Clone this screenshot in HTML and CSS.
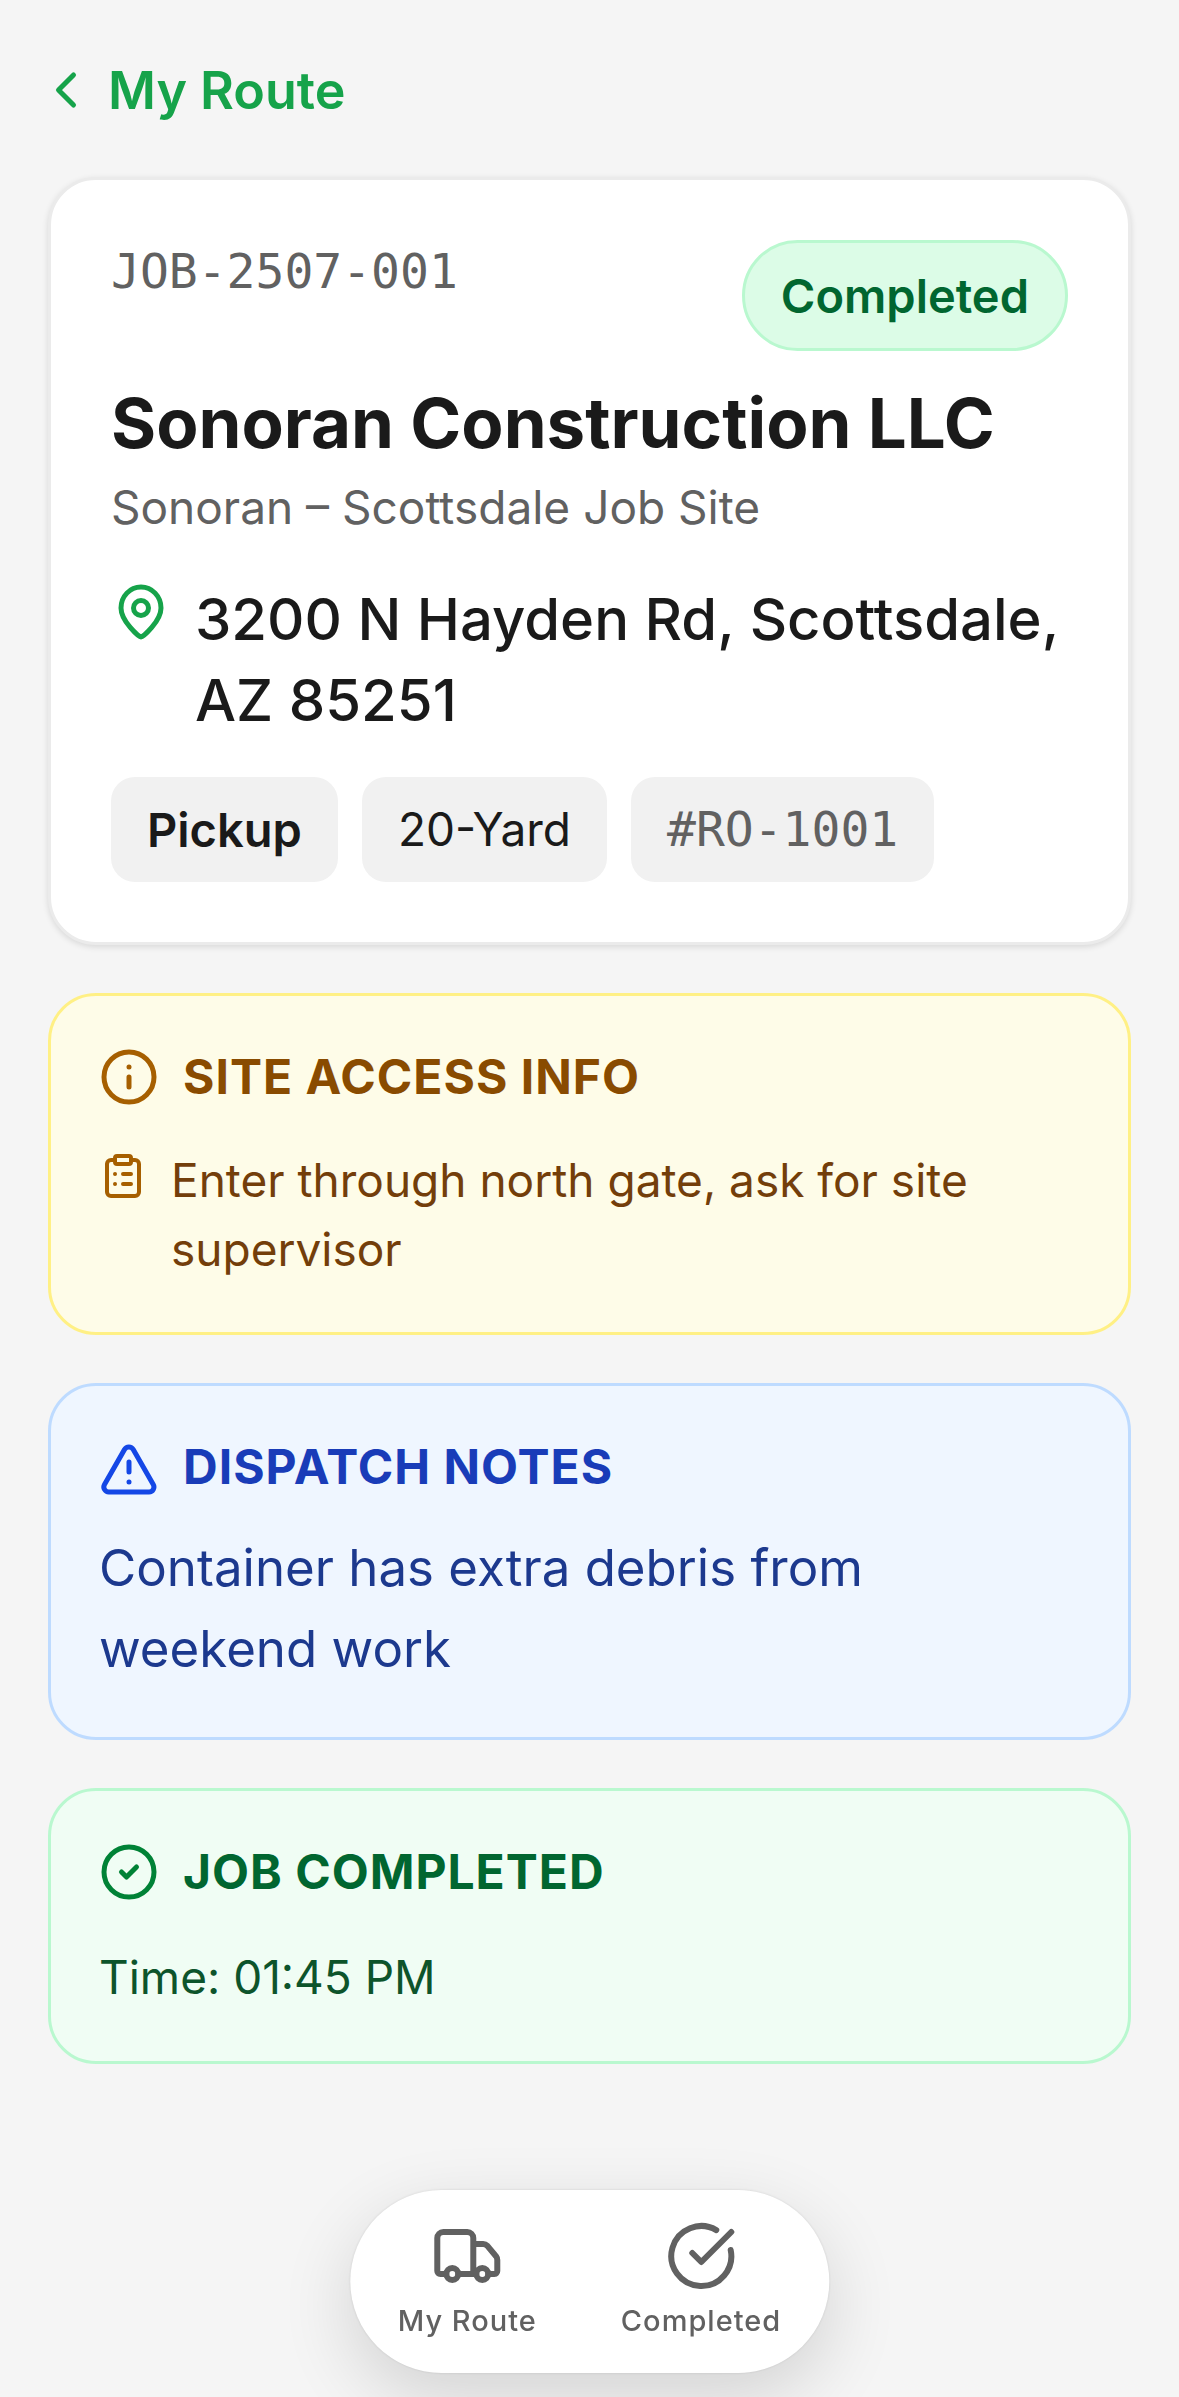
FILE: index.html
```html
<!DOCTYPE html>
<html lang="en">
<head>
  <meta charset="UTF-8">
  <meta name="viewport" content="width=device-width, initial-scale=1.0">
  <title>JOB-2507-001</title>
  <link rel="stylesheet" href="styles.css">
</head>
<body>
  <header class="header">
    <a class="back" href="#">
      <svg class="icon" viewBox="0 0 24 24"><path d="M15 18l-6-6 6-6"/></svg>
      My Route
    </a>
  </header>

  <main class="content">
    <section class="card">
      <div class="card-top">
        <span class="job-id">JOB-2507-001</span>
        <span class="badge">Completed</span>
      </div>
      <h1 class="customer">Sonoran Construction LLC</h1>
      <p class="site">Sonoran – Scottsdale Job Site</p>
      <a class="address" href="#">
        <svg class="icon" viewBox="0 0 24 24">
          <path d="M12 22c-.8 0-8-6.300-8-11.600a8 8.400 0 0 1 16 0C20 15.700 12.800 22 12 22z"/>
          <circle cx="12" cy="10.400" r="3"/>
        </svg>
        <span>3200 N Hayden Rd, Scottsdale, AZ 85251</span>
      </a>
      <div class="chips">
        <span class="chip chip-type">Pickup</span>
        <span class="chip">20-Yard</span>
        <span class="chip chip-id">#RO-1001</span>
      </div>
    </section>

    <section class="notice access">
      <h2 class="notice-title">
        <svg class="icon" viewBox="0 0 24 24">
          <circle cx="12" cy="12" r="10"/>
          <path d="M12 12v4M12 8h.01"/>
        </svg>
        SITE ACCESS INFO
      </h2>
      <div class="notice-row">
        <svg class="icon icon-small" viewBox="0 0 24 24">
          <rect x="8" y="2" width="8" height="4" rx="1"/>
          <path d="M16 4h2a2 2 0 0 1 2 2v14a2 2 0 0 1-2 2H6a2 2 0 0 1-2-2V6a2 2 0 0 1 2-2h2M12 11h4M12 16h4M8 11h.01M8 16h.01"/>
        </svg>
        <p class="notice-text">Enter through north gate, ask for site supervisor</p>
      </div>
    </section>

    <section class="notice dispatch">
      <h2 class="notice-title">
        <svg class="icon" viewBox="0 -1 24 24">
          <path d="M21.700 18l-8-14a2 2 0 0 0-3.500 0l-8 14A2 2 0 0 0 4 21h16a2 2 0 0 0 1.700-3M12 9v4M12 17h.01"/>
        </svg>
        DISPATCH NOTES
      </h2>
      <p class="notice-text">Container has extra debris from weekend work</p>
    </section>

    <section class="notice done">
      <h2 class="notice-title">
        <svg class="icon" viewBox="0 0 24 24">
          <circle cx="12" cy="12" r="10"/>
          <path d="M9 12l2 2 4-4"/>
        </svg>
        JOB COMPLETED
      </h2>
      <p class="notice-text">Time: 01:45 PM</p>
    </section>
  </main>

  <nav class="tabs">
    <a class="tab" href="#">
      <svg class="icon icon-large" viewBox="0 0 24 24">
        <path d="M5 18H3a1 1 0 0 1-1-1V6a2 2 0 0 1 2-2h8a2 2 0 0 1 2 2v12M9 18h6M19 18h2a1 1 0 0 0 1-1v-3.700a2 2 0 0 0-.4-1.200l-2.900-3.500a2 2 0 0 0-1.500-.6H14"/>
        <circle cx="7" cy="18" r="2"/>
        <circle cx="17" cy="18" r="2"/>
      </svg>
      My Route
    </a>
    <a class="tab" href="#">
      <svg class="icon icon-large" viewBox="0 0 24 24">
        <path d="M21.800 10A10 10 0 1 1 17 3.350M9 11l3 3L22 4"/>
      </svg>
      Completed
    </a>
  </nav>
</body>
</html>
```

FILE: styles.css
```css
* {
  box-sizing: border-box;
}

body {
  font-family: Inter, "Liberation Sans", sans-serif;
  font-size: 46px;
  margin: 0;
  min-height: 100vh;
  background: #f5f5f5;
  color: #1a1a1a;
}

h1, h2, p {
  margin: 0;
}

a {
  color: inherit;
  text-decoration: none;
}

.icon {
  width: 60px;
  height: 60px;
  flex-shrink: 0;
  fill: none;
  stroke: currentColor;
  stroke-width: 2;
  stroke-linecap: round;
  stroke-linejoin: round;
}

.icon-small {
  width: 48px;
  height: 48px;
}

.icon-large {
  width: 72px;
  height: 72px;
}

.header {
  padding: 48px 36px 45px;
}

.back {
  display: inline-flex;
  align-items: center;
  gap: 12px;
  height: 84px;
  vertical-align: top;
  color: #16a34a;
  font-size: 52px;
  font-weight: 600;
}

.content {
  display: flex;
  flex-direction: column;
  gap: 48px;
  padding: 0 48px 240px;
}

.card {
  padding: 60px;
  background: #fff;
  border: 3px solid #ebebeb;
  border-radius: 48px;
  box-shadow: 0 2px 6px rgba(0, 0, 0, 0.12);
}

.card-top {
  display: flex;
  justify-content: space-between;
  align-items: flex-start;
}

.job-id,
.chip-id {
  font-family: "DejaVu Sans Mono", monospace;
  font-size: 48px;
  color: #616161;
}

.job-id {
  line-height: 63px;
}

.badge {
  padding: 18px 36px;
  font-size: 47px;
  line-height: 69px;
  font-weight: 600;
  color: #016630;
  background: #dcfce7;
  border: 3px solid #b9f8cf;
  border-radius: 60px;
}

.customer {
  margin-top: 27px;
  font-size: 69px;
  line-height: 90px;
  font-weight: 700;
}

.site {
  margin-top: 3px;
  line-height: 72px;
  color: #616161;
}

.address {
  display: flex;
  gap: 24px;
  margin-top: 36px;
  font-size: 58px;
  line-height: 81px;
  font-weight: 500;
}

.address .icon {
  margin-top: 3px;
  color: #16a34a;
}

.chips {
  display: flex;
  flex-wrap: wrap;
  gap: 24px;
  margin-top: 36px;
}

.chip {
  padding: 18px 36px;
  line-height: 69px;
  background: #f1f1f1;
  border-radius: 24px;
}

.chip-type {
  font-size: 47px;
  font-weight: 600;
}

.notice {
  padding: 48px;
  border: 3px solid;
  border-radius: 48px;
}

.notice-title {
  display: flex;
  align-items: center;
  gap: 24px;
  font-size: 48px;
  line-height: 66px;
  font-weight: 700;
  letter-spacing: 1px;
}

.notice-row {
  display: flex;
  gap: 24px;
  margin-top: 36px;
}

.notice-row .icon {
  margin-top: 6px;
}

.access {
  color: #733e0a;
  background: #fefce8;
  border-color: #fff085;
}

.access .icon {
  color: #a65f00;
}

.access .notice-title {
  color: #894b00;
}

.access .notice-text {
  line-height: 69px;
}

.dispatch {
  color: #1c398e;
  background: #eff6ff;
  border-color: #bedbff;
}

.dispatch .icon {
  color: #1447e6;
}

.dispatch .notice-title {
  color: #193cb8;
}

.dispatch .notice-text {
  margin-top: 27px;
  font-size: 51px;
  line-height: 81px;
}

.done {
  color: #0d542b;
  background: #f0fdf4;
  border-color: #b9f8cf;
}

.done .icon {
  color: #008236;
}

.done .notice-title {
  color: #016630;
}

.done .notice-text {
  margin-top: 36px;
  line-height: 72px;
}

/* floating tab bar */
.tabs {
  position: fixed;
  bottom: 24px;
  left: 50%;
  transform: translateX(-50%);
  display: flex;
  gap: 12px;
  padding: 0 12px;
  background: #fff;
  border-radius: 96px;
  box-shadow: 0 0 3px rgba(0, 0, 0, 0.12), 0 24px 72px rgba(0, 0, 0, 0.14);
}

.tab {
  display: flex;
  flex-direction: column;
  align-items: center;
  gap: 6px;
  padding: 30px 36px;
  font-size: 29px;
  line-height: 45px;
  font-weight: 500;
  letter-spacing: 1px;
  white-space: nowrap;
  color: #616161;
}
```
